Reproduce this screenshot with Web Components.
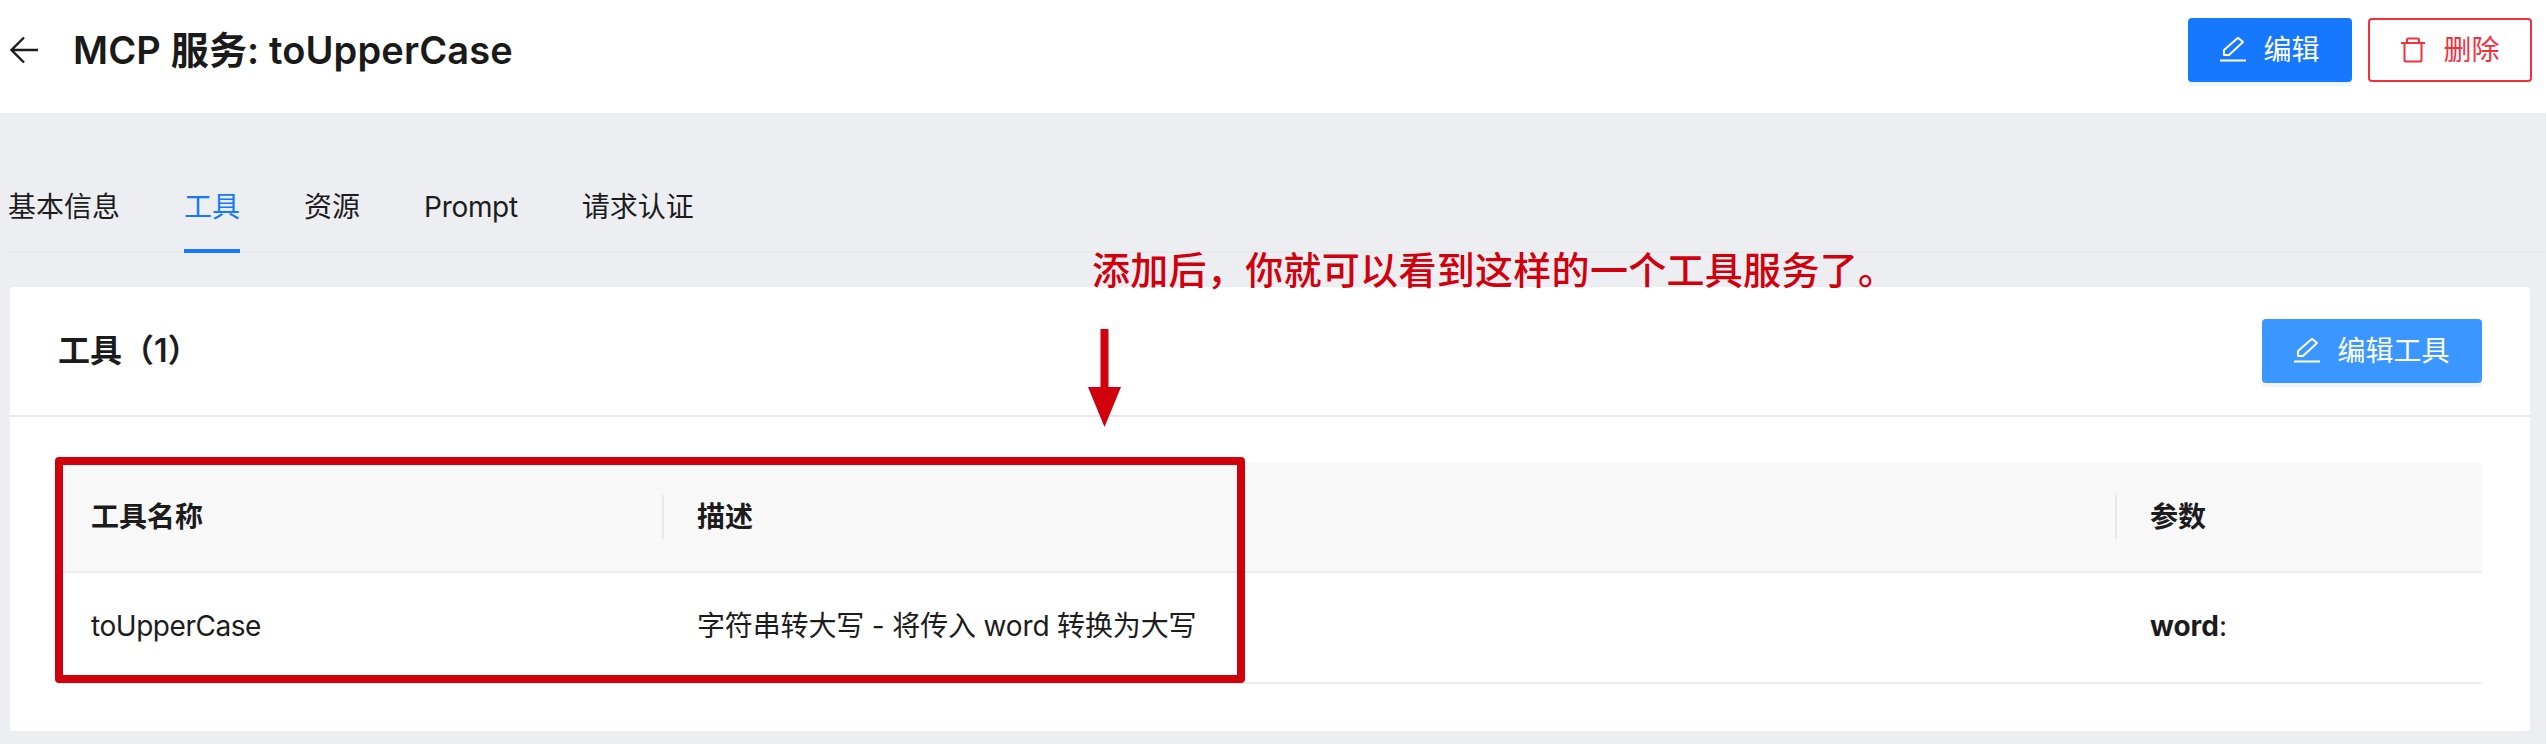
<!DOCTYPE html>
<html lang="zh-CN">
<head>
<meta charset="utf-8">
<title>MCP 服务: toUpperCase</title>
<style>
  html, body { margin: 0; padding: 0; }
  body {
    background: #eceef2;
    color: #1c1c1c;
    font: 28px/40px Inter, "Noto Sans CJK SC", sans-serif;
    position: relative;
    height: 744px;
    overflow: hidden;
  }
</style>
</head>
<body>
  <page-header heading="MCP 服务: toUpperCase">
    <action-button variant="primary" icon="edit">编辑</action-button>
    <action-button variant="danger" icon="trash">删除</action-button>
  </page-header>

  <tab-bar>
    <tab-item>基本信息</tab-item>
    <tab-item active>工具</tab-item>
    <tab-item>资源</tab-item>
    <tab-item style="letter-spacing:-.3px">Prompt</tab-item>
    <tab-item>请求认证</tab-item>
  </tab-bar>

  <tool-card heading="工具（1）">
    <action-button slot="action" variant="light" icon="edit" wide>编辑工具</action-button>
    <table-row head>
      <table-cell>工具名称</table-cell>
      <table-cell>描述</table-cell>
      <table-cell>参数</table-cell>
    </table-row>
    <table-row>
      <table-cell style="letter-spacing:-.45px">toUpperCase</table-cell>
      <table-cell style="letter-spacing:-.15px">字符串转大写 - 将传入 word 转换为大写</table-cell>
      <table-cell><b>word</b>:</table-cell>
    </table-row>
  </tool-card>

  <red-markup></red-markup>

<script>
const ICONS = {
  edit: `<svg width="26" height="26" viewBox="0 0 26 26" fill="none" stroke="currentColor" stroke-width="2">
    <path d="M4 18V13L18 .8 23 5 9 18Z" stroke-linejoin="round"/>
    <path d="M0 23.5h26"/>
  </svg>`,
  trash: `<svg width="26" height="26" viewBox="0 0 26 26" fill="none" stroke="currentColor" stroke-width="2">
    <path d="M1 6h24"/>
    <path d="M7 6V3A1.5 1.5 0 0 1 8.5 1.5h9A1.5 1.5 0 0 1 19 3v3"/>
    <path d="M4.5 6v17A1.5 1.5 0 0 0 6 24.5h14a1.5 1.5 0 0 0 1.5-1.5V6"/>
  </svg>`
};

class PageHeader extends HTMLElement {
  constructor() {
    super();
    this.attachShadow({ mode: 'open' });
    this.shadowRoot.innerHTML = `
      <style>
        :host { display: flex; align-items: center; height: 113px; background: #fff; padding: 0 14px 14px 10px; box-sizing: border-box; }
        svg { flex: none; margin-right: 35px; }
        h1 { flex: 1; margin: 0; font-size: 38px; line-height: 48px; font-weight: 600; letter-spacing: .15px; color: #1a1a1a; }
        .actions { display: flex; gap: 16px; }
      </style>
      <svg width="28" height="28" viewBox="0 0 28 28" fill="none" stroke="#1c1c1c" stroke-width="2.4">
        <path d="M28 14H1.5M14 1.5 1.5 14 14 26.5"/>
      </svg>
      <h1>${this.getAttribute('heading')}</h1>
      <div class="actions"><slot></slot></div>
    `;
  }
}

class ActionButton extends HTMLElement {
  constructor() {
    super();
    this.attachShadow({ mode: 'open' });
    const icon = ICONS[this.getAttribute('icon')] || '';
    this.shadowRoot.innerHTML = `
      <style>
        :host { display: inline-flex; align-items: center; justify-content: center; gap: 17px; box-sizing: border-box; width: 164px; height: 64px; border-radius: 4px; font-size: 28px; line-height: 40px; }
        :host([wide]) { width: 220px; }
        :host([variant=primary]) { background: #1677ff; color: #fff; box-shadow: 0 4px 0 rgba(5,145,255,.08); }
        :host([variant=light]) { background: #3b97ff; color: #fff; box-shadow: 0 4px 0 rgba(0,0,0,.05); }
        :host([variant=danger]) { background: #fff; color: #f5303d; border: 2px solid #f5303d; }
        svg { display: block; }
      </style>
      ${icon}<span><slot></slot></span>
    `;
  }
}

class TabBar extends HTMLElement {
  constructor() {
    super();
    this.attachShadow({ mode: 'open' });
    this.shadowRoot.innerHTML = `
      <style>
        :host { display: flex; align-items: flex-end; gap: 64px; height: 140px; box-sizing: border-box; margin-left: 8px; border-bottom: 2px solid #e8e9ea; }
      </style>
      <slot></slot>
    `;
  }
}

class TabItem extends HTMLElement {
  constructor() {
    super();
    this.attachShadow({ mode: 'open' });
    this.shadowRoot.innerHTML = `
      <style>
        :host { display: block; height: 66px; margin-bottom: -2px; box-sizing: border-box; line-height: 40px; border-bottom: 4px solid transparent; white-space: nowrap; }
        :host([active]) { color: #1677ff; border-bottom-color: #1677ff; }
      </style>
      <slot></slot>
    `;
  }
}

class ToolCard extends HTMLElement {
  constructor() {
    super();
    this.attachShadow({ mode: 'open' });
    this.shadowRoot.innerHTML = `
      <style>
        :host { display: block; margin: 34px 16px 0 10px; background: #fff; border-radius: 4px; }
        header { display: flex; align-items: center; justify-content: space-between; height: 130px; box-sizing: border-box; padding: 0 48px; border-bottom: 2px solid #e9e9e9; }
        h2 { margin: 0; font-size: 32px; line-height: 40px; font-weight: 600; color: #1c1c1c; }
        .body { padding: 46px 48px 47px; }
      </style>
      <header><h2>${this.getAttribute('heading')}</h2><slot name="action"></slot></header>
      <div class="body"><slot></slot></div>
    `;
  }
}

class TableRow extends HTMLElement {
  constructor() {
    super();
    this.attachShadow({ mode: 'open' });
    this.shadowRoot.innerHTML = `
      <style>
        :host { display: grid; grid-template-columns: 606px 1453px 1fr; height: 111px; padding-bottom: 4px; box-sizing: border-box; border-bottom: 2px solid #ececec; }
        :host([head]) { height: 110px; padding-bottom: 0; background: #f8f8f8; font-weight: 600; border-radius: 4px 4px 0 0; }
      </style>
      <slot></slot>
    `;
  }
}

class TableCell extends HTMLElement {
  constructor() {
    super();
    this.attachShadow({ mode: 'open' });
    this.shadowRoot.innerHTML = `
      <style>
        :host { display: flex; align-items: center; padding-left: 33px; position: relative; white-space: pre; }
        :host-context([head]):host(:not(:last-child))::after { content: ""; position: absolute; right: 0; top: 32px; height: 44px; width: 2px; background: #e8e8e8; }
      </style>
      <span><slot></slot></span>
    `;
  }
}

// 截图上的红色标注
class RedMarkup extends HTMLElement {
  constructor() {
    super();
    this.attachShadow({ mode: 'open' });
    this.shadowRoot.innerHTML = `
      <style>
        :host { position: absolute; inset: 0; pointer-events: none; color: #d0000d; }
        .note { position: absolute; left: 1092px; top: 243px; font-size: 38px; font-weight: 500; letter-spacing: .3px; line-height: 50px; white-space: nowrap; font-family: "Noto Sans CJK SC", sans-serif; }
        .box { position: absolute; left: 55px; top: 457px; width: 1190px; height: 226px; box-sizing: border-box; border: 8px solid #d0000d; border-radius: 4px; }
        svg { position: absolute; left: 1088px; top: 329px; }
      </style>
      <div class="note">添加后，你就可以看到这样的一个工具服务了。</div>
      <svg width="33" height="98" viewBox="0 0 33 98"><path fill="#d0000d" d="M12.5 0h8v58h12.5L16.5 98 0 58h12.5Z"/></svg>
      <div class="box"></div>
    `;
  }
}

customElements.define('page-header', PageHeader);
customElements.define('action-button', ActionButton);
customElements.define('tab-bar', TabBar);
customElements.define('tab-item', TabItem);
customElements.define('tool-card', ToolCard);
customElements.define('table-row', TableRow);
customElements.define('table-cell', TableCell);
customElements.define('red-markup', RedMarkup);
</script>
</body>
</html>
